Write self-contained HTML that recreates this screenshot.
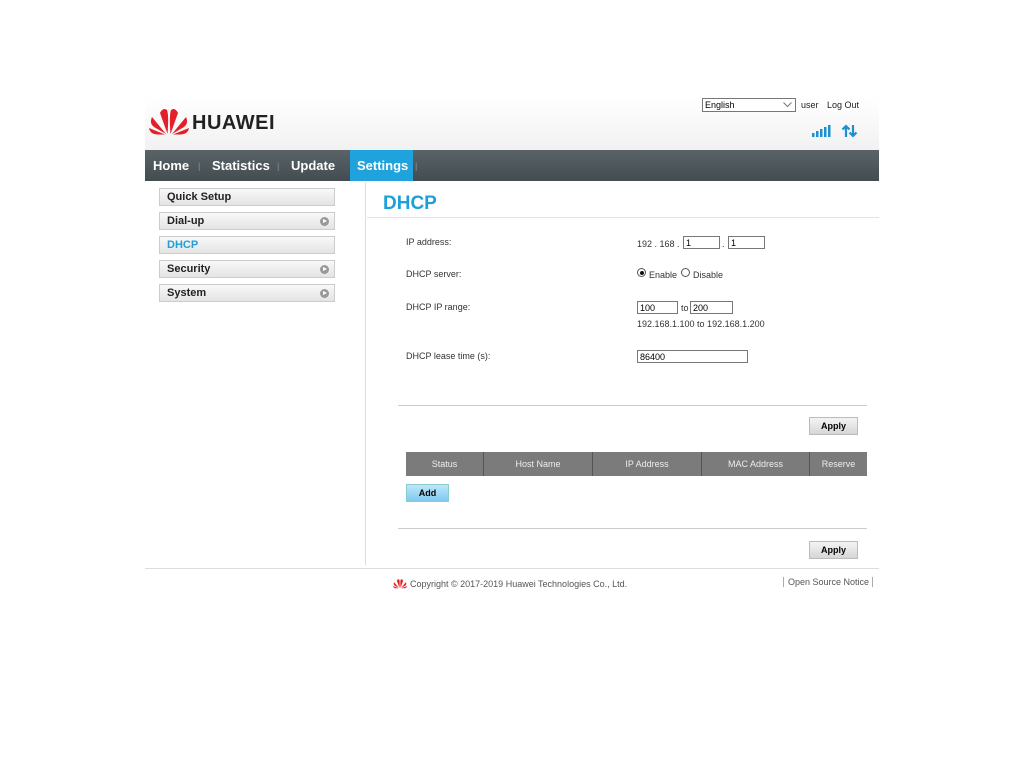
<!DOCTYPE html>
<html><head><meta charset="utf-8"><style>
body{margin:0;width:1024px;height:768px;background:#fff;font-family:"Liberation Sans",Arial,sans-serif;position:relative;overflow:hidden}
.a{position:absolute}
.t{font-size:9px;color:#333}
.nav{left:145px;top:150px;width:734px;height:31px;background:linear-gradient(#5a6368,#434c51)}
.nav span{position:absolute;top:8px;color:#fff;font-weight:bold;font-size:13px}
.sep{color:#8a9296!important;font-weight:normal!important;font-size:9px!important;top:11px!important}
.side{left:159px;width:176px;height:18px;border:1px solid #ccc;background:linear-gradient(#f8f8f8,#e4e4e4);font-size:11px;font-weight:bold;color:#222;box-sizing:border-box;padding:2px 7px}
.side i{position:absolute;right:5px;top:4px;width:9px;height:9px;border-radius:50%;background:#999}
.side i:after{content:"";position:absolute;left:3px;top:2px;border-left:4px solid #fff;border-top:2.5px solid transparent;border-bottom:2.5px solid transparent}
.inp{border:1px solid #777;height:13px;box-sizing:border-box;font-size:9px;padding:1px 2px 0;line-height:11px;background:#fff}
.btn{width:49px;height:18px;border:1px solid #bbb;background:linear-gradient(#f4f4f4,#d6d6d6);font-size:9px;font-weight:bold;text-align:center;line-height:17px;box-sizing:border-box}
.th{top:452px;height:24px;background:#7b7b7b;color:#eee;font-size:9px;text-align:center;line-height:24px;border-right:1px solid #555;box-sizing:border-box}
</style></head><body>
<div class="a" style="left:145px;top:98px;width:734px;height:52px;background:linear-gradient(#fff,#f1f1f1)"></div>
<svg class="a" style="left:149px;top:106px" width="40" height="30" viewBox="0 0 40 28">
<g fill="#e3202a"><path d="M18.5 27 L11 6 Q14 0 18 3 Q20 8 18.5 27Z"/><path d="M21.5 27 L29 6 Q26 0 22 3 Q20 8 21.5 27Z"/><path d="M17 27 L3 10 Q0 16 5 20Z"/><path d="M23 27 L37 10 Q40 16 35 20Z"/><path d="M16 27.5 L0 21 Q1 27 8 27.5Z"/><path d="M24 27.5 L40 21 Q39 27 32 27.5Z"/></g></svg>
<div class="a" style="left:192px;top:112px;font-size:20px;font-weight:bold;color:#222;letter-spacing:0.5px">HUAWEI</div>
<div class="a inp" style="left:702px;top:98px;width:94px;height:14px;font-size:9px;line-height:12px;padding-top:0">English<svg style="position:absolute;right:3px;top:3px" width="9" height="6"><path d="M0.5 0.5L4.5 4.5L8.5 0.5" stroke="#777" fill="none"/></svg></div>
<div class="a t" style="left:801px;top:100px;color:#222">user</div>
<div class="a t" style="left:827px;top:100px;color:#222">Log Out</div>
<svg class="a" style="left:812px;top:124px" width="48" height="14"><g fill="#1e90d0"><rect x="0" y="9" width="2.5" height="4"/><rect x="4" y="7" width="2.5" height="6"/><rect x="8" y="5" width="2.5" height="8"/><rect x="12" y="3" width="2.5" height="10"/><rect x="16" y="1" width="2.5" height="12"/></g><g stroke="#1e90d0" stroke-width="2.2" fill="none"><path d="M34 13V2M30.5 5.5L34 2L37.5 5.5"/><path d="M41 1V12M37.5 8.5L41 12L44.5 8.5"/></g></svg>
<div class="a nav"><span style="left:8px">Home</span><span class="sep" style="left:53px">|</span><span style="left:67px">Statistics</span><span class="sep" style="left:132px">|</span><span style="left:146px">Update</span>
<div class="a" style="left:205px;top:0;width:63px;height:31px;background:#20a3dc"></div><span style="left:212px">Settings</span><span class="sep" style="left:270px">|</span></div>
<div class="a side" style="top:188px">Quick Setup</div>
<div class="a side" style="top:212px">Dial-up<i></i></div>
<div class="a side" style="top:236px;color:#1d9fd9">DHCP</div>
<div class="a side" style="top:260px">Security<i></i></div>
<div class="a side" style="top:284px">System<i></i></div>
<div class="a" style="left:365px;top:182px;width:1px;height:383px;background:#ddd"></div>
<div class="a" style="left:383px;top:193px;font-size:19px;font-weight:bold;color:#1d9fd9">DHCP</div>
<div class="a" style="left:367px;top:217px;width:512px;height:1px;background:#e3e3e3"></div>
<div class="a t" style="left:406px;top:237px">IP address:</div>
<div class="a t" style="left:406px;top:269px">DHCP server:</div>
<div class="a t" style="left:406px;top:302px">DHCP IP range:</div>
<div class="a t" style="left:406px;top:351px">DHCP lease time (s):</div>
<div class="a t" style="left:637px;top:239px">192 . 168 .</div>
<div class="a inp" style="left:683px;top:236px;width:37px">1</div>
<div class="a t" style="left:722px;top:239px">.</div>
<div class="a inp" style="left:728px;top:236px;width:37px">1</div>
<div class="a" style="left:637px;top:268px;width:9px;height:9px;border:1px solid #555;border-radius:50%;box-sizing:border-box"><div style="margin:1.5px;width:4px;height:4px;border-radius:50%;background:#111"></div></div>
<div class="a t" style="left:649px;top:270px">Enable</div>
<div class="a" style="left:681px;top:268px;width:9px;height:9px;border:1px solid #555;border-radius:50%;box-sizing:border-box"></div>
<div class="a t" style="left:693px;top:270px">Disable</div>
<div class="a inp" style="left:637px;top:301px;width:41px">100</div>
<div class="a t" style="left:681px;top:303px">to</div>
<div class="a inp" style="left:690px;top:301px;width:43px">200</div>
<div class="a t" style="left:637px;top:319px">192.168.1.100 to 192.168.1.200</div>
<div class="a inp" style="left:637px;top:350px;width:111px">86400</div>
<div class="a" style="left:398px;top:405px;width:469px;height:1px;background:#ccc"></div>
<div class="a btn" style="left:809px;top:417px">Apply</div>
<div class="a th" style="left:406px;width:78px">Status</div>
<div class="a th" style="left:484px;width:109px">Host Name</div>
<div class="a th" style="left:593px;width:109px">IP Address</div>
<div class="a th" style="left:702px;width:108px">MAC Address</div>
<div class="a th" style="left:810px;width:57px;border-right:none">Reserve</div>
<div class="a btn" style="left:406px;top:484px;width:43px;background:linear-gradient(#bfe6fa,#7dcaf0);border-color:#8cc">Add</div>
<div class="a" style="left:398px;top:528px;width:469px;height:1px;background:#ccc"></div>
<div class="a btn" style="left:809px;top:541px">Apply</div>
<div class="a" style="left:145px;top:568px;width:734px;height:1px;background:#ddd"></div>
<svg class="a" style="left:393px;top:578px" width="14" height="11" viewBox="0 0 40 28"><g fill="#e3202a"><path d="M18.5 27 L11 6 Q14 0 18 3 Q20 8 18.5 27Z"/><path d="M21.5 27 L29 6 Q26 0 22 3 Q20 8 21.5 27Z"/><path d="M17 27 L3 10 Q0 16 5 20Z"/><path d="M23 27 L37 10 Q40 16 35 20Z"/><path d="M16 27.5 L0 21 Q1 27 8 27.5Z"/><path d="M24 27.5 L40 21 Q39 27 32 27.5Z"/></g></svg>
<div class="a t" style="left:410px;top:579px;color:#555">Copyright © 2017-2019 Huawei Technologies Co., Ltd.</div>
<div class="a t" style="left:783px;top:577px;color:#555;border-left:1px solid #aaa;border-right:1px solid #aaa;padding:0 3px 0 4px">Open Source Notice</div>
</body></html>
